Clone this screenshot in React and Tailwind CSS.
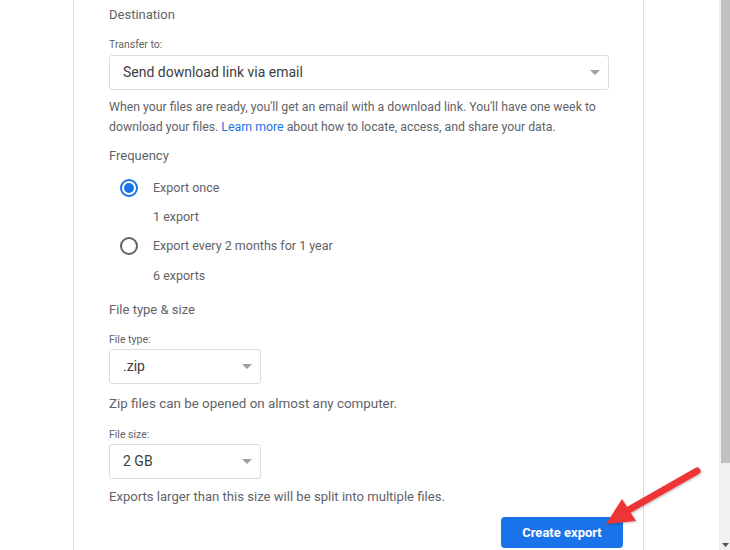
import { useState } from "react";

const font = { fontFamily: "Roboto, 'Liberation Sans', Arial, sans-serif" };

function Caret() {
  return (
    <svg width="10" height="5" viewBox="0 0 10 5" className="shrink-0">
      <path d="M0 0 L10 0 L5 5 Z" fill="#9aa0a6" />
    </svg>
  );
}

function SelectBox({ value, className }) {
  return (
    <div
      className={`flex items-center justify-between h-[35px] border border-[#dadce0] rounded-[3px] pl-[13px] pr-[8px] ${className}`}
    >
      <span className="text-[14px] text-[#3c4043]">{value}</span>
      <Caret />
    </div>
  );
}

function Radio({ checked }) {
  return (
    <span
      className={`w-[18px] h-[18px] rounded-full border-2 flex items-center justify-center shrink-0 ${
        checked ? "border-[#1a73e8]" : "border-[#5f6368]"
      }`}
    >
      {checked && <span className="w-[10px] h-[10px] rounded-full bg-[#1a73e8]" />}
    </span>
  );
}

export default function App() {
  const [freq, setFreq] = useState("once");

  return (
    <div className="relative w-[730px] h-[550px] bg-white overflow-hidden flex" style={font}>
      <div className="w-[73px] shrink-0" />

      {/* card */}
      <div className="w-[571px] shrink-0 border-x border-[#dadce0] pl-[35px] pr-[20px] pt-[5px] text-[#5f6368]">
        <div className="text-[13px] leading-[20px] text-[#5f6368]">Destination</div>

        <div className="mt-[12px] text-[10.5px] leading-[16px]">Transfer to:</div>
        <SelectBox value="Send download link via email" className="mt-[2px] w-[500px]" />

        <p className="mt-[7px] text-[12.3px] leading-[20px] whitespace-nowrap">
          When your files are ready, you'll get an email with a download link. You'll have one week to
          <br />
          download your files. <span className="text-[#1a73e8]">Learn more</span> about how to locate, access, and
          share your data.
        </p>

        <div className="mt-[9px] text-[13px] leading-[20px]">Frequency</div>

        <div className="pl-[11px]">
          <button
            onClick={() => setFreq("once")}
            className="mt-[12px] flex items-center gap-[15px] text-[12.5px] leading-[20px] text-[#5f6368]"
          >
            <Radio checked={freq === "once"} />
            Export once
          </button>
          <div className="mt-[9px] pl-[33px] text-[12.5px] leading-[20px]">1 export</div>
          <button
            onClick={() => setFreq("every")}
            className="mt-[9px] flex items-center gap-[15px] text-[12.5px] leading-[20px] text-[#5f6368]"
          >
            <Radio checked={freq === "every"} />
            Export every 2 months for 1 year
          </button>
          <div className="mt-[10px] pl-[33px] text-[12.5px] leading-[20px]">6 exports</div>
        </div>

        <div className="mt-[14px] text-[13px] leading-[20px]">File type &amp; size</div>

        <div className="mt-[12px] text-[10.5px] leading-[16px]">File type:</div>
        <SelectBox value=".zip" className="mt-[1px] w-[152px]" />
        <div className="mt-[10px] text-[13.4px] leading-[20px]">Zip files can be opened on almost any computer.</div>

        <div className="mt-[13px] text-[10.5px] leading-[16px]">File size:</div>
        <SelectBox value="2 GB" className="mt-[1px] w-[152px]" />
        <div className="mt-[8px] text-[13.1px] leading-[20px]">
          Exports larger than this size will be split into multiple files.
        </div>

        <div className="mt-[10px] flex justify-end">
          <button className="w-[122px] h-[31px] rounded-[4px] bg-[#1a73e8] text-white text-[13px] font-bold">
            Create export
          </button>
        </div>
      </div>

      <div className="flex-1" />

      {/* scrollbar */}
      <div className="w-[11px] shrink-0 bg-[#f1f1f1] flex flex-col">
        <div className="ml-[2px] h-[463px] bg-[#c1c1c1]" />
        <div className="flex-1" />
        <div className="h-[10px] flex items-center justify-center pl-[2px]">
          <svg width="7" height="4" viewBox="0 0 7 4">
            <path d="M0 0 L7 0 L3.5 4 Z" fill="#505050" />
          </svg>
        </div>
      </div>

      {/* annotation arrow */}
      <svg className="absolute inset-0 pointer-events-none" width="730" height="550" viewBox="0 0 730 550">
        <defs>
          <filter id="sh" x="-20%" y="-20%" width="140%" height="140%">
            <feDropShadow dx="1" dy="1" stdDeviation="1" floodColor="#000" floodOpacity="0.25" />
          </filter>
        </defs>
        <g filter="url(#sh)">
          <line x1="697" y1="471" x2="625" y2="512" stroke="#ee3535" strokeWidth="7" strokeLinecap="round" />
          <polygon points="606,524 622,499 636,521" fill="#ee3535" />
        </g>
      </svg>
    </div>
  );
}
